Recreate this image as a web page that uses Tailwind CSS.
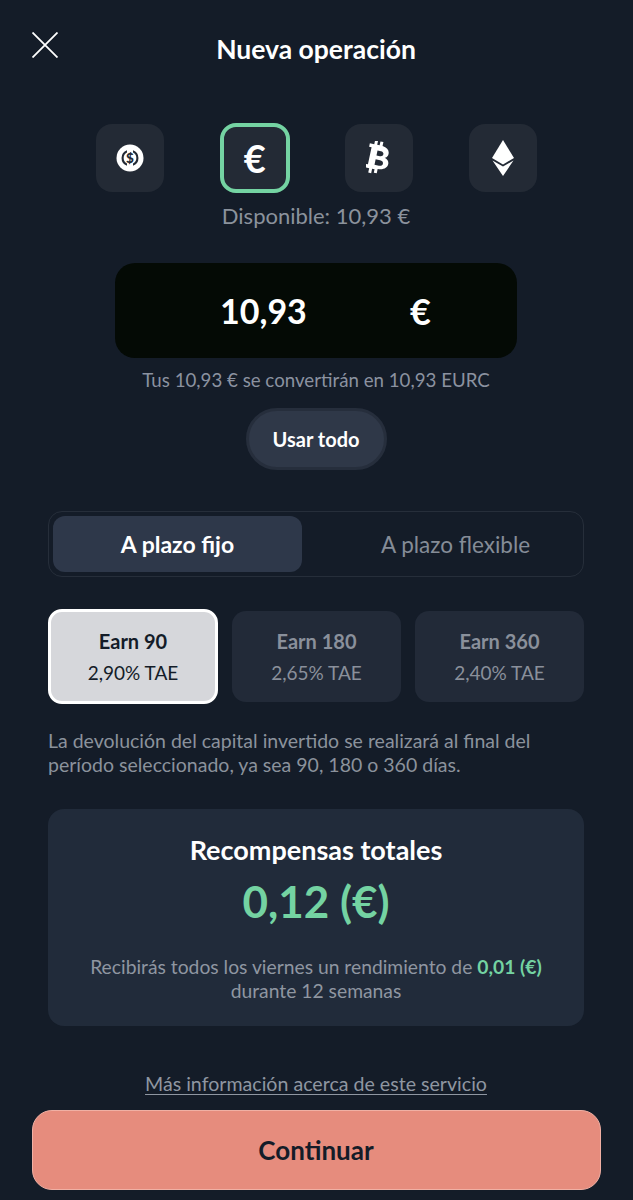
<!doctype html>
<html lang="es"><head><meta charset="utf-8"><script src="https://cdn.jsdelivr.net/npm/@tailwindcss/browser@4"></script></head>
<body class="m-0 bg-[#141c28]">
<div class="w-[632px] h-[1200px] overflow-hidden bg-[#141c28] flex flex-col items-center font-['Lato','Noto_Sans',sans-serif] text-[#8f96a1]">
  <header class="w-full h-[100px] px-[32px] pt-[32px] flex items-start shrink-0">
    <svg class="w-[26px] h-[26px] shrink-0" viewBox="0 0 26 26" fill="none" stroke="#fff" stroke-width="1.8"><path d="M0.5 0.5L25.5 25.5M25.5 0.5L0.5 25.5"/></svg>
    <h1 class="w-[516px] text-center text-[26.500px] leading-[36px] font-bold text-white -mt-[1px]">Nueva operación</h1>
  </header>
  <div class="w-[441px] ml-[1px] mt-[23px] h-[70px] flex justify-between items-center shrink-0">
    <div class="w-[68px] h-[68px] rounded-[16px] bg-[#232a35] flex items-center justify-center">
      <svg class="w-[28px] h-[28px]" viewBox="0 0 28 28"><circle cx="14" cy="14" r="13.500" fill="#fff"/><path fill="#232a35" d="M11 6.200A8.300 8.300 0 0 0 11 21.800V19.500A6.200 6.200 0 0 1 11 8.500zM17 6.200A8.300 8.300 0 0 1 17 21.800V19.500A6.200 6.200 0 0 0 17 8.500z"/><text x="14" y="18.800" text-anchor="middle" font-size="13.500" font-weight="900" font-family="Lato" fill="#232a35">$</text></svg>
    </div>
    <div class="w-[70px] h-[70px] rounded-[16px] bg-[#232a35] border-[4px] border-[#74d3a2] flex items-center justify-center text-white text-[38px] leading-none font-bold">€</div>
    <div class="w-[68px] h-[68px] rounded-[16px] bg-[#232a35] flex items-center justify-center">
      <svg class="w-[26px] h-[34px]" viewBox="0 0 26 34"><g transform="rotate(12 13 17)"><path fill="#fff" fill-rule="evenodd" d="M1 4.500h4.500V.5h3v4h2.500V.5h3v4.100c5 .5 7.500 2.900 7.500 6.400 0 2.200-1 3.800-3 4.600 3 .8 4.800 2.700 4.800 5.400 0 4-3.100 6.700-9.300 7.100v4.400h-3V29h-2.500v4.500h-3V29H.5v-3.500h3V8H1zM10 10v5H13.500c1.900 0 3-1 3-2.500S15.400 10 13.500 10zm0 9v5.500H14.500c2.200 0 3.500-1 3.500-2.750S16.700 19 14.500 19z"/></g></svg>
    </div>
    <div class="w-[68px] h-[68px] rounded-[16px] bg-[#232a35] flex items-center justify-center">
      <svg class="w-[24px] h-[36px]" viewBox="0 0 24 36"><path fill="#fff" d="M12 0L23 18L12 24.500L1 18z"/><path fill="#fff" d="M1.500 20.500L12 26.500L22.500 20.500L12 36z"/></svg>
    </div>
  </div>
  <p class="mt-[10px] text-[22px] leading-[26px] text-[#8b929c] shrink-0">Disponible: 10,93 €</p>
  <div class="mt-[34px] w-[402px] h-[95px] rounded-[20px] bg-[#040a05] flex items-center text-white font-bold text-[34px] shrink-0">
    <span class="ml-[105px] w-[190px]">10,93</span><span class="text-[36px]">€</span>
  </div>
  <p class="mt-[10px] text-[18.700px] leading-[24px] text-[#8b92a0] shrink-0">Tus 10,93 € se convertirán en 10,93 EURC</p>
  <button class="mt-[16px] w-[141px] h-[62px] rounded-full bg-[#2f3848] border-[3px] border-[#262e3c] text-white text-[20px] font-bold shrink-0">Usar todo</button>
  <div class="mt-[41px] w-[536px] h-[66px] rounded-[14px] border border-[#262e3a] p-[4px] flex shrink-0">
    <div class="w-[249px] rounded-[12px] bg-[#2e384a] flex items-center justify-center text-white text-[23px] font-bold">A plazo fijo</div>
    <div class="flex-1 flex items-center justify-center pl-[30px] pt-[2px] text-[22.500px] text-[#858c97]">A plazo flexible</div>
  </div>
  <div class="mt-[32px] w-[536px] h-[95px] grid grid-cols-[170px_169px_169px] gap-[14px] items-center shrink-0">
    <div class="h-[95px] rounded-[14px] bg-[#d6d7db] border-[3px] border-white flex flex-col items-center justify-center text-[#141c28]">
      <span class="text-[20px] leading-[32px] font-bold">Earn 90</span><span class="text-[19px] leading-[32px]">2,90% TAE</span>
    </div>
    <div class="h-[91px] rounded-[14px] bg-[#222a38] flex flex-col items-center justify-center text-[#8a909b]">
      <span class="text-[20px] leading-[32px] font-bold">Earn 180</span><span class="text-[19px] leading-[32px]">2,65% TAE</span>
    </div>
    <div class="h-[91px] rounded-[14px] bg-[#222a38] flex flex-col items-center justify-center text-[#8a909b]">
      <span class="text-[20px] leading-[32px] font-bold">Earn 360</span><span class="text-[19px] leading-[32px]">2,40% TAE</span>
    </div>
  </div>
  <p class="mt-[25px] w-[536px] text-[19.500px] leading-[24px] text-[#8b929c] shrink-0">La devolución del capital invertido se realizará al final del<br>período seleccionado, ya sea 90, 180 o 360 días.</p>
  <section class="mt-[32px] w-[536px] h-[217px] rounded-[16px] bg-[#212b3a] flex flex-col items-center text-center shrink-0">
    <h2 class="mt-[23px] text-white text-[27px] leading-[36px] font-bold">Recompensas totales</h2>
    <p class="mt-[4px] text-[44px] leading-[58px] font-bold text-[#74d3a2]">0,12 (€)</p>
    <p class="mt-[25px] text-[19.300px] leading-[24px] text-[#8f96a1]">Recibirás todos los viernes un rendimiento de <span class="text-[#74d3a2] font-bold">0,01 (€)</span><br>durante 12 semanas</p>
  </section>
  <a class="mt-[46px] text-[19.600px] leading-[24px] text-[#8f96a1] underline underline-offset-[3px] shrink-0">Más información acerca de este servicio</a>
  <button class="mt-[14px] w-[569px] h-[80px] rounded-[20px] bg-[#e68c7d] border border-[#f0b0a4] text-[#141c28] text-[26px] font-bold shrink-0">Continuar</button>
</div>
</body></html>
